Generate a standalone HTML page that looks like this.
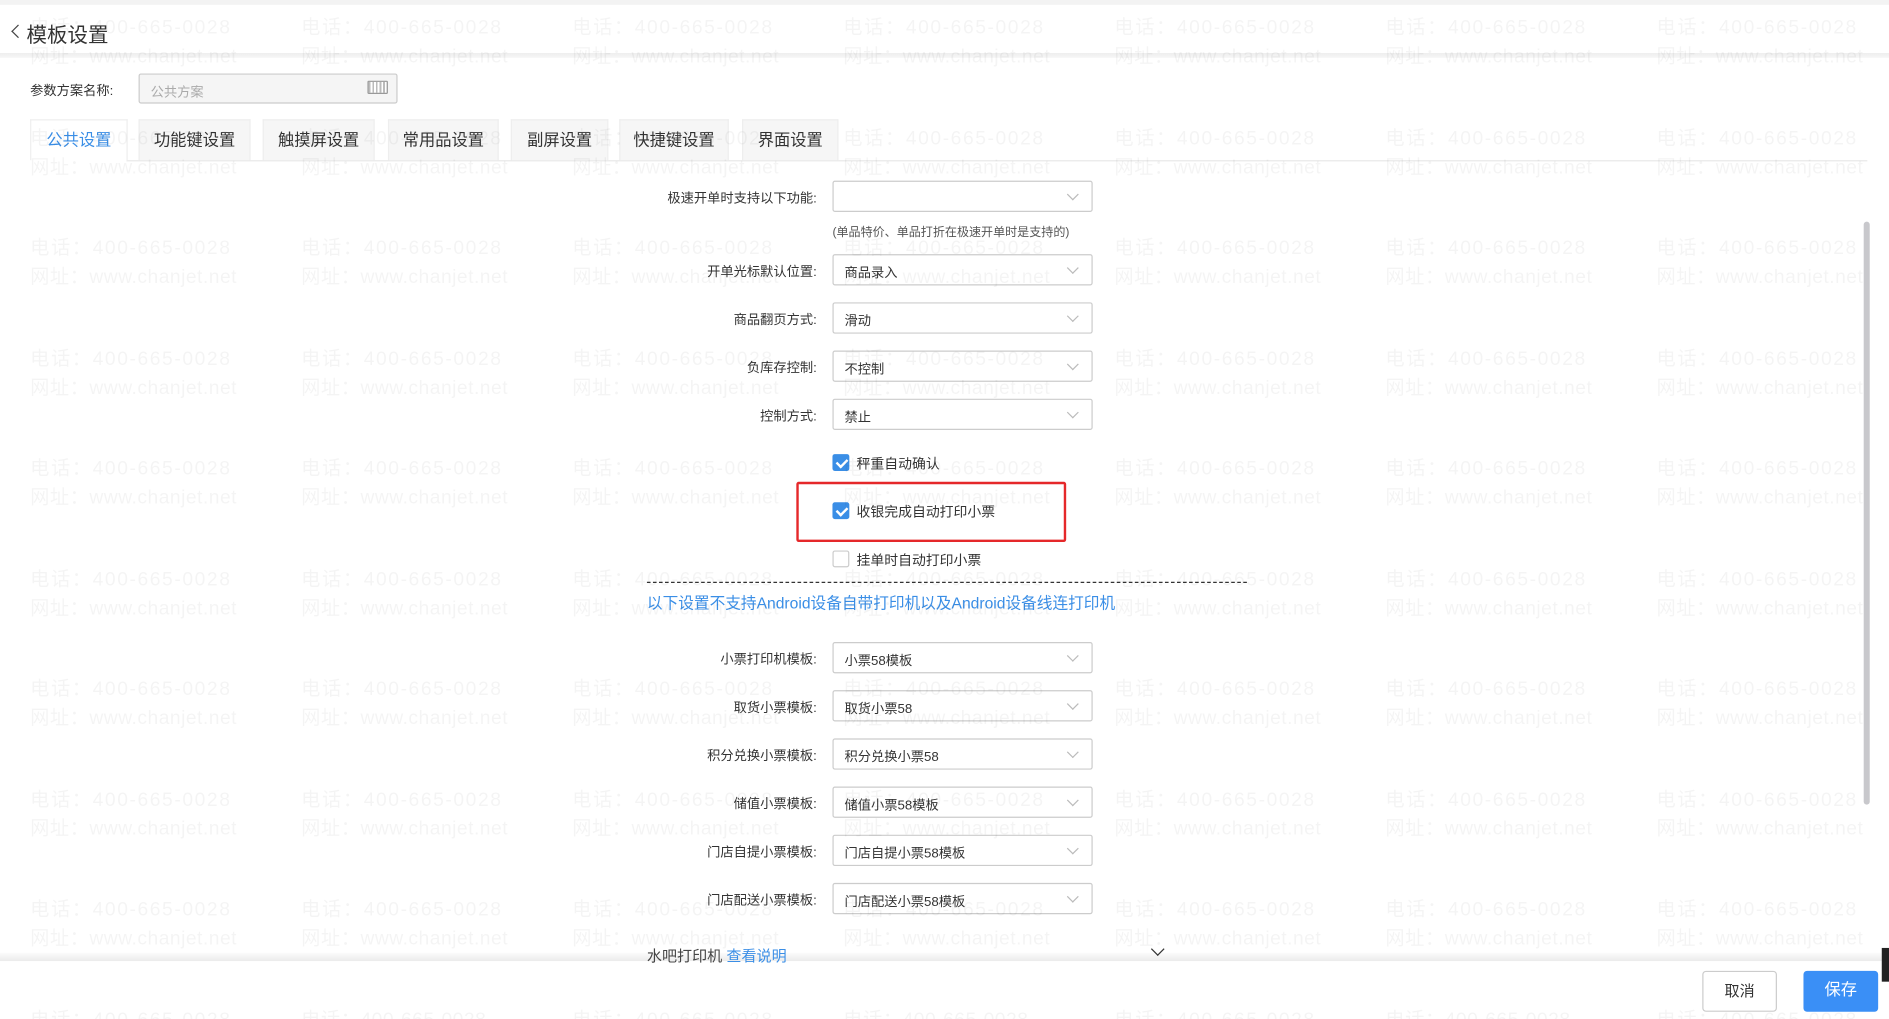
<!DOCTYPE html>
<html><head><meta charset="utf-8">
<style>
*{margin:0;padding:0;box-sizing:border-box}
html,body{width:1889px;height:1019px;overflow:hidden;background:#fff}
#s{position:absolute;left:0;top:0;width:1568px;height:846px;transform:scale(1.20472,1.2045);transform-origin:0 0;font-family:"Liberation Sans","Noto Sans CJK SC",sans-serif;color:#333;overflow:hidden}
.a{position:absolute}
.top{left:0;top:0;width:1568px;height:4px;background:#f3f3f3}
.hdr{left:0;top:44px;width:1568px;height:4px;background:linear-gradient(#eee,#f6f6f6)}
.title{left:8px;top:15px;font-size:17px;background:#fff;padding-right:2px;color:#333}
.lbl{font-size:11px;color:#333}
.inp{left:115px;top:61px;width:215px;height:25px;background:#f5f5f5;border:1px solid #ccc;border-radius:2px;font-size:11px;color:#aaa;padding:6px 9px}
.tab{top:99px;height:34px;background:#f6f6f6;border:1px solid #eee;border-bottom:none;font-size:13.5px;text-align:center;line-height:34px;color:#333}
.tab.on{background:#fff;color:#3a8ee6}
.tline{left:105px;top:133px;width:1445px;height:1px;background:#e8e8e8}
.fl{font-size:11px;color:#333;text-align:right;width:300px;left:378px}
.sel{left:691px;width:216px;height:26px;border:1px solid #ccc;border-radius:2px;background:#fff;font-size:11px;color:#333;padding:6px 9px}
.sel:after{content:"";position:absolute;right:12px;top:7px;width:6px;height:6px;border-right:1px solid #bbb;border-bottom:1px solid #bbb;transform:rotate(45deg)}
.cb{left:691px;width:14px;height:14px;border-radius:2px}
.cb.on{background:#3a8ee6}
.cb.on:after{content:"";position:absolute;left:4.5px;top:1.5px;width:3.5px;height:7px;border-right:2px solid #fff;border-bottom:2px solid #fff;transform:rotate(45deg)}
.cb.off{border:1px solid #ccc;background:#fff}
.ct{left:711px;font-size:11.5px;color:#333}
.wm{left:0;top:0;width:1568px;height:846px;pointer-events:none;z-index:5}
.wm i{position:absolute;font-style:normal;font-size:16px;line-height:24px;color:rgba(0,0,0,0.045);white-space:nowrap;letter-spacing:0.4px}
.wm i:nth-child(odd){letter-spacing:1.3px}
.foot{left:0;top:798px;width:1568px;height:48px;background:#fff;z-index:3}
.fsh{left:0;top:790px;width:1568px;height:8px;background:linear-gradient(rgba(0,0,0,0),rgba(0,0,0,0.08));z-index:2}
.btn{top:806px;height:34px;border-radius:3px;font-size:12.5px;text-align:center;line-height:32px;z-index:4}
</style></head><body><div id="s">
<div class="a top"></div>
<div class="a hdr"></div>
<div class="a" style="left:11px;top:22px;width:8px;height:8px;border-left:1.5px solid #444;border-bottom:1.5px solid #444;transform:rotate(45deg);z-index:6"></div>
<div class="a title" style="left:22px">模板设置</div>
<div class="a lbl" style="left:25px;top:67px">参数方案名称:</div>
<div class="a inp">公共方案</div>
<div class="a" style="left:305px;top:67px;width:17px;height:11px;border:1px solid #999;border-radius:1px;background:repeating-linear-gradient(90deg,#bbb 0 1.5px,#fff 1.5px 3px)"></div>
<div class="a tab on" style="left:25px;width:81px">公共设置</div>
<div class="a tab" style="left:115px;width:93px">功能键设置</div>
<div class="a tab" style="left:218px;width:93px">触摸屏设置</div>
<div class="a tab" style="left:322px;width:92px">常用品设置</div>
<div class="a tab" style="left:424px;width:81px">副屏设置</div>
<div class="a tab" style="left:514px;width:91px">快捷键设置</div>
<div class="a tab" style="left:616px;width:80px">界面设置</div>
<div class="a tline"></div>

<div class="a fl" style="top:156px">极速开单时支持以下功能:</div>
<div class="a sel" style="top:150px"></div>
<div class="a" style="left:691px;top:184px;font-size:10px;color:#555">(单品特价、单品打折在极速开单时是支持的)</div>
<div class="a fl" style="top:217px">开单光标默认位置:</div>
<div class="a sel" style="top:211px">商品录入</div>
<div class="a fl" style="top:257px">商品翻页方式:</div>
<div class="a sel" style="top:251px">滑动</div>
<div class="a fl" style="top:297px">负库存控制:</div>
<div class="a sel" style="top:291px">不控制</div>
<div class="a fl" style="top:337px">控制方式:</div>
<div class="a sel" style="top:331px">禁止</div>

<div class="a cb on" style="top:377px"></div><div class="a ct" style="top:377px">秤重自动确认</div>
<div class="a" style="left:661px;top:400px;width:224px;height:50px;border:2px solid #e5282a;border-radius:2px"></div>
<div class="a cb on" style="top:417px"></div><div class="a ct" style="top:417px">收银完成自动打印小票</div>
<div class="a cb off" style="top:457px"></div><div class="a ct" style="top:457px">挂单时自动打印小票</div>
<div class="a" style="left:537px;top:483px;width:498px;border-top:1px dashed #333"></div>
<div class="a" style="left:537px;top:490px;font-size:13px;color:#3a8ee6">以下设置不支持Android设备自带打印机以及Android设备线连打印机</div>

<div class="a fl" style="top:539px">小票打印机模板:</div><div class="a sel" style="top:533px">小票58模板</div>
<div class="a fl" style="top:579px">取货小票模板:</div><div class="a sel" style="top:573px">取货小票58</div>
<div class="a fl" style="top:619px">积分兑换小票模板:</div><div class="a sel" style="top:613px">积分兑换小票58</div>
<div class="a fl" style="top:659px">储值小票模板:</div><div class="a sel" style="top:653px">储值小票58模板</div>
<div class="a fl" style="top:699px">门店自提小票模板:</div><div class="a sel" style="top:693px">门店自提小票58模板</div>
<div class="a fl" style="top:739px">门店配送小票模板:</div><div class="a sel" style="top:733px">门店配送小票58模板</div>
<div class="a" style="left:537px;top:783px;font-size:12.5px;color:#444;z-index:4">水吧打印机 <span style="color:#3a8ee6">查看说明</span></div>
<div class="a" style="left:957px;top:784px;width:8px;height:8px;border-right:1.5px solid #333;border-bottom:1.5px solid #333;transform:rotate(45deg);z-index:4"></div>

<div class="a" style="left:1547px;top:184px;width:5px;height:484px;background:#c8c8cc;border-radius:3px"></div>
<div class="a fsh"></div>
<div class="a foot"></div>
<div class="a btn" style="left:1413px;width:62px;border:1px solid #ccc;background:#fff;color:#333">取消</div>
<div class="a btn" style="left:1497px;width:62px;background:#3a8ff6;color:#fff;font-size:13.5px">保存</div>
<div class="a" style="left:1562px;top:787px;width:6px;height:28px;background:#222;z-index:4"></div>

<div class="a wm">
<i style="left:25px;top:12px">电话：400-665-0028</i><i style="left:25px;top:36px">网址：www.chanjet.net</i>
<i style="left:250px;top:12px">电话：400-665-0028</i><i style="left:250px;top:36px">网址：www.chanjet.net</i>
<i style="left:475px;top:12px">电话：400-665-0028</i><i style="left:475px;top:36px">网址：www.chanjet.net</i>
<i style="left:700px;top:12px">电话：400-665-0028</i><i style="left:700px;top:36px">网址：www.chanjet.net</i>
<i style="left:925px;top:12px">电话：400-665-0028</i><i style="left:925px;top:36px">网址：www.chanjet.net</i>
<i style="left:1150px;top:12px">电话：400-665-0028</i><i style="left:1150px;top:36px">网址：www.chanjet.net</i>
<i style="left:1375px;top:12px">电话：400-665-0028</i><i style="left:1375px;top:36px">网址：www.chanjet.net</i>
<i style="left:25px;top:104px">电话：400-665-0028</i><i style="left:25px;top:128px">网址：www.chanjet.net</i>
<i style="left:250px;top:104px">电话：400-665-0028</i><i style="left:250px;top:128px">网址：www.chanjet.net</i>
<i style="left:475px;top:104px">电话：400-665-0028</i><i style="left:475px;top:128px">网址：www.chanjet.net</i>
<i style="left:700px;top:104px">电话：400-665-0028</i><i style="left:700px;top:128px">网址：www.chanjet.net</i>
<i style="left:925px;top:104px">电话：400-665-0028</i><i style="left:925px;top:128px">网址：www.chanjet.net</i>
<i style="left:1150px;top:104px">电话：400-665-0028</i><i style="left:1150px;top:128px">网址：www.chanjet.net</i>
<i style="left:1375px;top:104px">电话：400-665-0028</i><i style="left:1375px;top:128px">网址：www.chanjet.net</i>
<i style="left:25px;top:195px">电话：400-665-0028</i><i style="left:25px;top:219px">网址：www.chanjet.net</i>
<i style="left:250px;top:195px">电话：400-665-0028</i><i style="left:250px;top:219px">网址：www.chanjet.net</i>
<i style="left:475px;top:195px">电话：400-665-0028</i><i style="left:475px;top:219px">网址：www.chanjet.net</i>
<i style="left:700px;top:195px">电话：400-665-0028</i><i style="left:700px;top:219px">网址：www.chanjet.net</i>
<i style="left:925px;top:195px">电话：400-665-0028</i><i style="left:925px;top:219px">网址：www.chanjet.net</i>
<i style="left:1150px;top:195px">电话：400-665-0028</i><i style="left:1150px;top:219px">网址：www.chanjet.net</i>
<i style="left:1375px;top:195px">电话：400-665-0028</i><i style="left:1375px;top:219px">网址：www.chanjet.net</i>
<i style="left:25px;top:287px">电话：400-665-0028</i><i style="left:25px;top:311px">网址：www.chanjet.net</i>
<i style="left:250px;top:287px">电话：400-665-0028</i><i style="left:250px;top:311px">网址：www.chanjet.net</i>
<i style="left:475px;top:287px">电话：400-665-0028</i><i style="left:475px;top:311px">网址：www.chanjet.net</i>
<i style="left:700px;top:287px">电话：400-665-0028</i><i style="left:700px;top:311px">网址：www.chanjet.net</i>
<i style="left:925px;top:287px">电话：400-665-0028</i><i style="left:925px;top:311px">网址：www.chanjet.net</i>
<i style="left:1150px;top:287px">电话：400-665-0028</i><i style="left:1150px;top:311px">网址：www.chanjet.net</i>
<i style="left:1375px;top:287px">电话：400-665-0028</i><i style="left:1375px;top:311px">网址：www.chanjet.net</i>
<i style="left:25px;top:378px">电话：400-665-0028</i><i style="left:25px;top:402px">网址：www.chanjet.net</i>
<i style="left:250px;top:378px">电话：400-665-0028</i><i style="left:250px;top:402px">网址：www.chanjet.net</i>
<i style="left:475px;top:378px">电话：400-665-0028</i><i style="left:475px;top:402px">网址：www.chanjet.net</i>
<i style="left:700px;top:378px">电话：400-665-0028</i><i style="left:700px;top:402px">网址：www.chanjet.net</i>
<i style="left:925px;top:378px">电话：400-665-0028</i><i style="left:925px;top:402px">网址：www.chanjet.net</i>
<i style="left:1150px;top:378px">电话：400-665-0028</i><i style="left:1150px;top:402px">网址：www.chanjet.net</i>
<i style="left:1375px;top:378px">电话：400-665-0028</i><i style="left:1375px;top:402px">网址：www.chanjet.net</i>
<i style="left:25px;top:470px">电话：400-665-0028</i><i style="left:25px;top:494px">网址：www.chanjet.net</i>
<i style="left:250px;top:470px">电话：400-665-0028</i><i style="left:250px;top:494px">网址：www.chanjet.net</i>
<i style="left:475px;top:470px">电话：400-665-0028</i><i style="left:475px;top:494px">网址：www.chanjet.net</i>
<i style="left:700px;top:470px">电话：400-665-0028</i><i style="left:700px;top:494px">网址：www.chanjet.net</i>
<i style="left:925px;top:470px">电话：400-665-0028</i><i style="left:925px;top:494px">网址：www.chanjet.net</i>
<i style="left:1150px;top:470px">电话：400-665-0028</i><i style="left:1150px;top:494px">网址：www.chanjet.net</i>
<i style="left:1375px;top:470px">电话：400-665-0028</i><i style="left:1375px;top:494px">网址：www.chanjet.net</i>
<i style="left:25px;top:561px">电话：400-665-0028</i><i style="left:25px;top:585px">网址：www.chanjet.net</i>
<i style="left:250px;top:561px">电话：400-665-0028</i><i style="left:250px;top:585px">网址：www.chanjet.net</i>
<i style="left:475px;top:561px">电话：400-665-0028</i><i style="left:475px;top:585px">网址：www.chanjet.net</i>
<i style="left:700px;top:561px">电话：400-665-0028</i><i style="left:700px;top:585px">网址：www.chanjet.net</i>
<i style="left:925px;top:561px">电话：400-665-0028</i><i style="left:925px;top:585px">网址：www.chanjet.net</i>
<i style="left:1150px;top:561px">电话：400-665-0028</i><i style="left:1150px;top:585px">网址：www.chanjet.net</i>
<i style="left:1375px;top:561px">电话：400-665-0028</i><i style="left:1375px;top:585px">网址：www.chanjet.net</i>
<i style="left:25px;top:653px">电话：400-665-0028</i><i style="left:25px;top:677px">网址：www.chanjet.net</i>
<i style="left:250px;top:653px">电话：400-665-0028</i><i style="left:250px;top:677px">网址：www.chanjet.net</i>
<i style="left:475px;top:653px">电话：400-665-0028</i><i style="left:475px;top:677px">网址：www.chanjet.net</i>
<i style="left:700px;top:653px">电话：400-665-0028</i><i style="left:700px;top:677px">网址：www.chanjet.net</i>
<i style="left:925px;top:653px">电话：400-665-0028</i><i style="left:925px;top:677px">网址：www.chanjet.net</i>
<i style="left:1150px;top:653px">电话：400-665-0028</i><i style="left:1150px;top:677px">网址：www.chanjet.net</i>
<i style="left:1375px;top:653px">电话：400-665-0028</i><i style="left:1375px;top:677px">网址：www.chanjet.net</i>
<i style="left:25px;top:744px">电话：400-665-0028</i><i style="left:25px;top:768px">网址：www.chanjet.net</i>
<i style="left:250px;top:744px">电话：400-665-0028</i><i style="left:250px;top:768px">网址：www.chanjet.net</i>
<i style="left:475px;top:744px">电话：400-665-0028</i><i style="left:475px;top:768px">网址：www.chanjet.net</i>
<i style="left:700px;top:744px">电话：400-665-0028</i><i style="left:700px;top:768px">网址：www.chanjet.net</i>
<i style="left:925px;top:744px">电话：400-665-0028</i><i style="left:925px;top:768px">网址：www.chanjet.net</i>
<i style="left:1150px;top:744px">电话：400-665-0028</i><i style="left:1150px;top:768px">网址：www.chanjet.net</i>
<i style="left:1375px;top:744px">电话：400-665-0028</i><i style="left:1375px;top:768px">网址：www.chanjet.net</i>
<i style="left:25px;top:836px">电话：400-665-0028</i>
<i style="left:250px;top:836px">电话：400-665-0028</i>
<i style="left:475px;top:836px">电话：400-665-0028</i>
<i style="left:700px;top:836px">电话：400-665-0028</i>
<i style="left:925px;top:836px">电话：400-665-0028</i>
<i style="left:1150px;top:836px">电话：400-665-0028</i>
<i style="left:1375px;top:836px">电话：400-665-0028</i>
</div>
</div></body></html>
